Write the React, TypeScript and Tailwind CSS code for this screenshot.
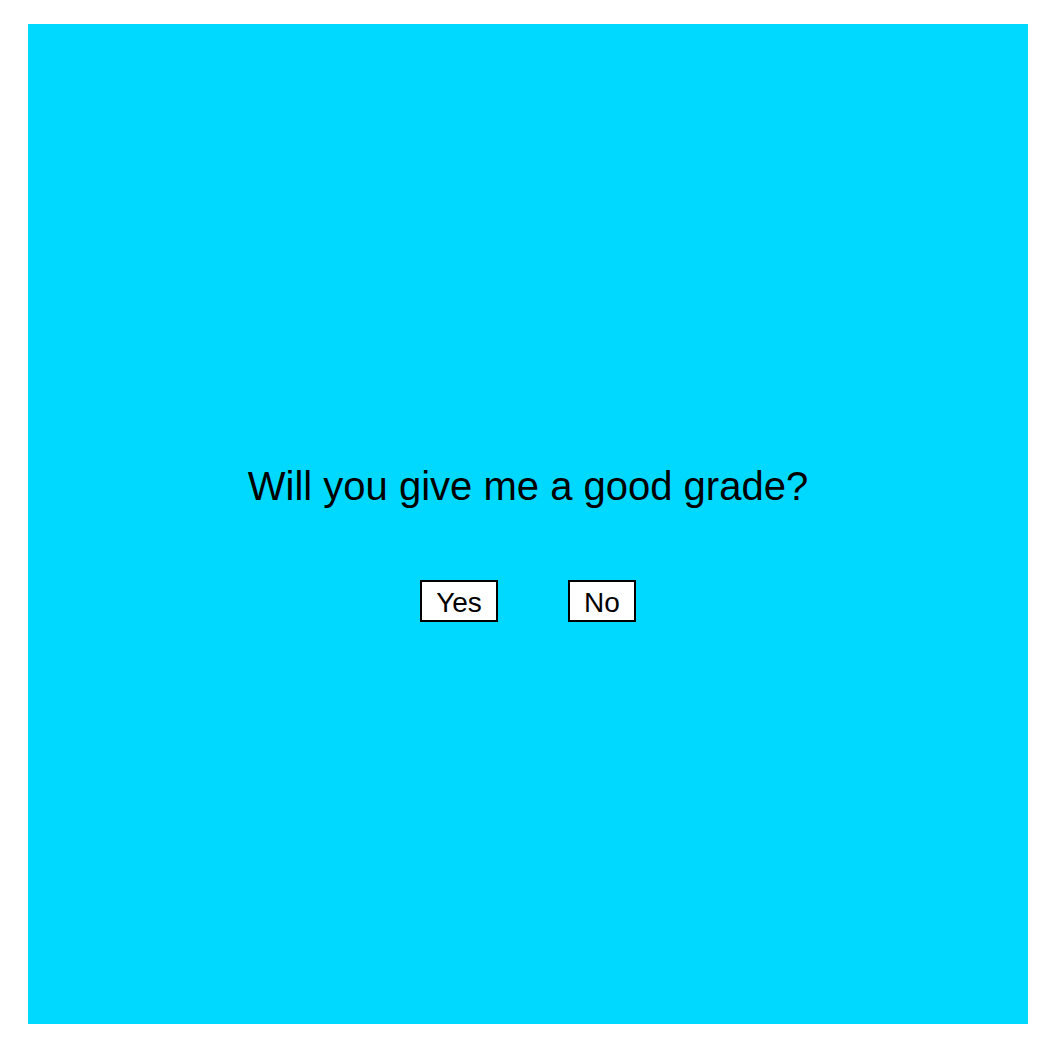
export default function App() {
    return (
        <div className="min-h-[1054px] bg-white pl-[28px] pt-[24px] font-['Liberation_Sans',Arial,sans-serif] text-black">
            <div className="flex h-[1000px] w-[1000px] flex-col items-center bg-[#00d9ff] pt-[439px]">
                <h1 className="text-[40px] font-normal leading-[46px]">Will you give me a good grade?</h1>
                <div className="mt-[71px] flex gap-[70px]">
                    <button className="w-[78px] border-2 border-black bg-white pb-px pt-[5px] text-center text-[28px] leading-[32px]">
                        Yes
                    </button>
                    <button className="w-[68px] border-2 border-black bg-white pb-px pt-[5px] text-center text-[28px] leading-[32px]">
                        No
                    </button>
                </div>
            </div>
        </div>
    );
}
